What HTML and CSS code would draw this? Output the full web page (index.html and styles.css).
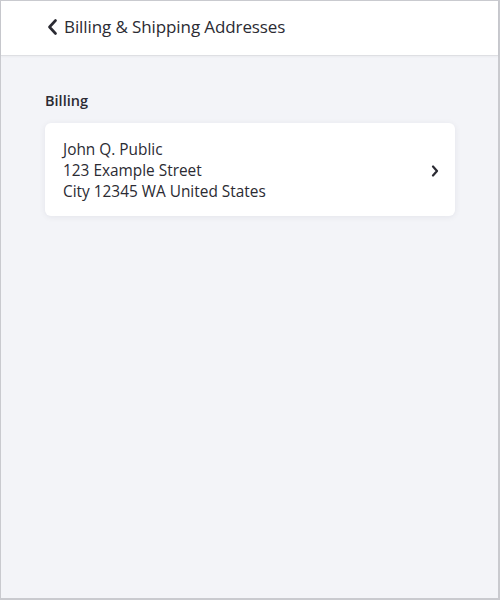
FILE: index.html
```html
<!DOCTYPE html>
<html>
<head>
<meta charset="utf-8">
<link rel="stylesheet" href="styles.css">
</head>
<body>
<div class="window">
  <header class="topbar">
    <span class="back">
      <svg width="11" height="16" viewBox="0 0 11 16"><path d="M8.5 1.5 L2.5 8 L8.5 14.5" fill="none" stroke="#2b2b33" stroke-width="2.6" stroke-linecap="round" stroke-linejoin="round"/></svg>
    </span>
    <h1 class="title">Billing &amp; Shipping Addresses</h1>
  </header>
  <main class="content">
    <h2 class="section-label">Billing</h2>
    <div class="card">
      <div class="address">
        <div>John Q. Public</div>
        <div>123 Example Street</div>
        <div>City 12345 WA United States</div>
      </div>
      <svg class="chevron" width="8" height="12" viewBox="0 0 8 12"><path d="M2 1.5 L6 6 L2 10.5" fill="none" stroke="#2b2b33" stroke-width="2.2" stroke-linecap="round" stroke-linejoin="round"/></svg>
    </div>
  </main>
</div>
</body>
</html>
```

FILE: styles.css
```css
html, body {
  margin: 0;
  padding: 0;
}
body {
  font-family: "Open Sans", "Noto Sans", "Liberation Sans", sans-serif;
  color: #2b2b33;
}
.window {
  box-sizing: border-box;
  width: 500px;
  height: 600px;
  border-style: solid;
  border-color: #c9cacf;
  border-width: 1px 2px 2px 1px;
  background: #f3f4f8;
  display: flex;
  flex-direction: column;
}
.topbar {
  height: 54px;
  background: #ffffff;
  border-bottom: 1px solid #dedfe3;
  box-shadow: 0 1px 2px rgba(0,0,0,0.04);
  display: flex;
  align-items: center;
  padding-left: 46px;
  gap: 6px;
}
.back {
  display: flex;
  align-items: center;
  margin-top: -2px;
}
.title {
  margin: 0;
  font-size: 17px;
  font-weight: 400;
  letter-spacing: -0.1px;
  margin-top: -3px;
}
.content {
  padding: 35px 43px 0 44px;
}
.section-label {
  margin: 0 0 12px 0;
  font-size: 14.5px;
  font-weight: 600;
  line-height: 20px;
}
.card {
  background: #ffffff;
  border-radius: 6px;
  box-shadow: 0 1px 6px rgba(30,35,60,0.07);
  padding: 16px 16px 14px 18px;
  display: flex;
  align-items: center;
  justify-content: space-between;
}
.address {
  font-size: 15.4px;
  line-height: 21px;
}
.chevron {
  margin-right: 0;
}
```
